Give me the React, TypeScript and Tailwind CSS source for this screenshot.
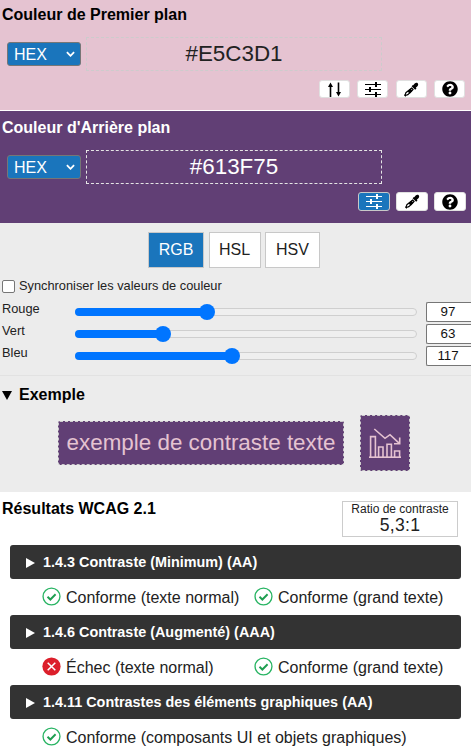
import React from 'react';
import { FaQuestionCircle } from 'react-icons/fa';

const Sliders = ({ active = false }: { active?: boolean }) => (
  <svg viewBox="0 0 16 15" className="w-[16px] h-[15px]" fill="none" stroke={active ? '#fff' : '#000'} strokeWidth="1">
    <path d="M0 2.5h16M0 7.5h16M0 12.5h16" />
    <path d="M11 0v5M5 5v5M11 10v5" strokeWidth="2" />
  </svg>
);

const Swap = () => (
  <svg viewBox="0 0 13 15" className="w-[13px] h-[15px]" fill="#000">
    <path d="M2.5 0.5l2.5 4.5H3.3v10H1.7V5H0z" />
    <path d="M10.5 14.5l2.5-4.5h-1.7V0.5H9.7V10H8z" />
  </svg>
);

const Dropper = () => (
  <svg viewBox="0 0 16 16" className="w-[15px] h-[15px]" fill="#000">
    <path d="M9.8 3.4l1.6-1.7c1-1 2.4-1.1 3.2-.3.8.8.7 2.2-.3 3.2l-1.7 1.6.7.7-1.4 1.4-3.8-3.8 1.4-1.4z" />
    <path d="M8.2 6.4l1.5 1.5-5.6 5.6-1.9.6-.7.7-.8-.8.7-.7.6-1.9 6.2-5z" fill="none" stroke="#000" strokeWidth="1.2" />
    <path d="M6.8 7l2.4 2.4-3 3-2.4-2.4z" />
  </svg>
);

const IconBtn = ({ children, active = false, wide = false }: { children: React.ReactNode; active?: boolean; wide?: boolean }) => (
  <button className={`${wide ? 'w-[32px] h-[19px]' : 'w-[31px] h-[18px]'} rounded-[3px] flex items-center justify-center border ${active ? 'bg-[#1a75bc] border-[#c8c8c8]' : 'bg-white border-[#e0e0e0]'}`}>
    {children}
  </button>
);

const HexSelect = () => (
  <div className="w-[74px] h-[24px] bg-[#1a75bc] border border-[#767676] rounded-[3px] flex items-center justify-between pl-[6px] pr-[5px] text-white text-[16px]">
    <span className="mt-px">HEX</span>
    <svg viewBox="0 0 10 6" className="w-[9px] h-[6px]" fill="none" stroke="#fff" strokeWidth="2"><path d="M1 1l4 4 4-4" /></svg>
  </div>
);

const Slider = ({ label, value, pct }: { label: string; value: number; pct: number }) => (
  <div className="h-[22px] flex items-center">
    <div className="w-[75px] text-[12.8px] text-[#222] -mt-[6px] pl-[2px]">{label}</div>
    <div className="relative w-[342px] h-[8px] rounded-full bg-[#efefef] border border-[#cfcfcf]">
      <div className="h-[8px] -mt-px -ml-px rounded-full bg-[#0075ff]" style={{ width: `${pct}px` }} />
      <div className="absolute top-[-5px] w-[16px] h-[16px] rounded-full bg-[#0075ff]" style={{ left: `${pct - 9}px` }} />
    </div>
    <div className="ml-[9px] w-[45px] h-[20px] bg-white border border-[#767676] rounded-l-[2px] border-r-0 flex items-center justify-center text-[13.33px] text-[#111] pr-[2px]">{value}</div>
  </div>
);

const CheckIcon = () => (
  <svg viewBox="0 0 20 20" className="w-[19px] h-[19px] shrink-0 mb-[2px]" fill="none">
    <circle cx="10" cy="10" r="8.9" stroke="#28b463" strokeWidth="1.4" />
    <path d="M5.8 10.3l3 2.9 5.5-5.6" stroke="#1e9e50" strokeWidth="2" />
  </svg>
);

const FailIcon = () => (
  <svg viewBox="0 0 20 20" className="w-[19px] h-[19px] shrink-0 mb-[2px]" fill="none">
    <circle cx="10" cy="10" r="9.6" fill="#dc1f2b" />
    <path d="M6 6l8 8M14 6l-8 8" stroke="#fff" strokeWidth="1.6" />
  </svg>
);

const Heading = ({ children }: { children: React.ReactNode }) => (
  <div className="mx-[10px] h-[34px] bg-[#333] rounded-[3px] flex items-center pl-[16px] pt-[2px] text-white font-bold text-[14.4px]">
    <svg viewBox="0 0 9 10" className="w-[9px] h-[10px] mr-[8px]" fill="#fff"><path d="M0 0l9 5-9 5z" /></svg>
    {children}
  </div>
);

const Result = ({ ok = true, children, w }: { ok?: boolean; children: React.ReactNode; w?: string }) => (
  <div className={`flex items-center gap-[5px] ${w ?? ''}`}>
    {ok ? <CheckIcon /> : <FailIcon />}
    <span className="mt-[2px]">{children}</span>
  </div>
);

export default function App() {
  return (
    <div className="w-[471px] h-[755px] overflow-hidden bg-white font-['Liberation_Sans',Arial,sans-serif] text-black">
      {/* premier plan */}
      <section className="h-[110px] bg-[#e5c3d1] pt-[6px] pl-[2px]">
        <h2 className="font-bold text-[16px] leading-[18px]">Couleur de Premier plan</h2>
        <div className="flex items-center mt-[13px] pl-[5px]">
          <HexSelect />
          <div className="ml-[5px] w-[296px] h-[34px] border border-dashed border-[#ccc] flex items-center justify-center text-[22.4px] text-[#222]">#E5C3D1</div>
        </div>
        <div className="flex justify-end gap-[7.5px] pr-[6px] mt-[9px]">
          <IconBtn><Swap /></IconBtn>
          <IconBtn><Sliders /></IconBtn>
          <IconBtn><Dropper /></IconBtn>
          <IconBtn><FaQuestionCircle className="text-[16px]" /></IconBtn>
        </div>
      </section>

      {/* arriere plan */}
      <section className="h-[112px] mt-px bg-[#613f75] pt-[8px] pl-[2px] text-white">
        <h2 className="font-bold text-[16px] leading-[18px]">Couleur d'Arrière plan</h2>
        <div className="flex items-center mt-[13px] pl-[5px]">
          <HexSelect />
          <div className="ml-[5px] w-[296px] h-[34px] border border-dashed border-[#e5e5e5] flex items-center justify-center text-[22.4px]">#613F75</div>
        </div>
        <div className="flex justify-end gap-[6px] pr-[5px] mt-[8px] text-black">
          <IconBtn active wide><Sliders active /></IconBtn>
          <IconBtn wide><Dropper /></IconBtn>
          <IconBtn wide><FaQuestionCircle className="text-[16px]" /></IconBtn>
        </div>
      </section>

      {/* reglages */}
      <section className="h-[269px] bg-[#ececec]">
        <div className="flex justify-center gap-[4.5px] pt-[9px] text-[16px] pr-[3px]">
          <div className="w-[56px] h-[36px] bg-[#1a75bc] border border-[#c8c8c8] text-white flex items-center justify-center">RGB</div>
          <div className="w-[52px] h-[36px] bg-white border border-[#c8c8c8] text-[#222] flex items-center justify-center">HSL</div>
          <div className="w-[55px] h-[36px] bg-white border border-[#c8c8c8] text-[#222] flex items-center justify-center">HSV</div>
        </div>
        <label className="flex items-center mt-[10px] pl-[2px] text-[12.8px] text-[#222] h-[16px]">
          <span className="w-[13px] h-[13px] rounded-[2px] bg-white border border-[#767676] mr-[4px]" />
          Synchroniser les valeurs de couleur
        </label>
        <div className="mt-[7px]">
          <Slider label="Rouge" value={97} pct={132} />
          <Slider label="Vert" value={63} pct={88} />
          <Slider label="Bleu" value={117} pct={157} />
        </div>
        <div className="mt-[8px] border-t border-[#e2e2e2] pt-[11px] pl-[2px] flex items-center font-bold text-[16px] h-[28px]">
          <svg viewBox="0 0 10 9" className="w-[10px] h-[9px] mr-[7px]" fill="#000"><path d="M0 0h10L5 9z" /></svg>
          Exemple
        </div>
        <div className="flex items-center justify-center gap-[16px] mt-[12px] pr-[3px]">
          <div className="w-[286px] h-[44px] bg-[#613f75] text-[#e5c3d1] border border-dashed border-[#ccc] rounded-[2px] flex items-center justify-center text-[22.4px]">
            exemple de contraste texte
          </div>
          <div className="w-[50px] h-[56px] bg-[#613f75] border border-dashed border-[#ccc] rounded-[2px] flex items-center justify-center">
            <svg viewBox="0 0 32 30" className="w-[32px] h-[30px]" fill="none" stroke="#e5c3d1" strokeWidth="1.6">
              <path d="M0 29.3h32" strokeWidth="1.8" />
              <path d="M1.6 29V8.6h4.8V29M9.6 29V19h4.4v10M18 29V16.3h4.4V29M25.6 29v-6h5v6" />
              <path d="M5.3 1l10.7 9.3 5-3.6 9.3 8.6" />
              <path d="M30.7 9.5v6.2H25" />
            </svg>
          </div>
        </div>
      </section>

      {/* resultats */}
      <section className="text-[16px] text-[#222]">
        <div className="h-[53px] flex justify-between pl-[2px] pr-[13px] pt-[9px]">
          <h2 className="font-bold text-[16px] leading-[14px] mt-px text-black">Résultats WCAG 2.1</h2>
          <div className="w-[116px] h-[36px] border border-[#ccc] flex flex-col items-center text-[#222]">
            <span className="text-[12px] leading-[13px] mt-[1px]">Ratio de contraste</span>
            <span className="text-[17.6px] leading-[19px] tracking-[0.3px]">5,3:1</span>
          </div>
        </div>
        <Heading>1.4.3 Contraste (Minimum) (AA)</Heading>
        <div className="h-[36px] flex items-center pl-[42px]">
          <Result w="w-[212px]">Conforme (texte normal)</Result>
          <Result>Conforme (grand texte)</Result>
        </div>
        <Heading>1.4.6 Contraste (Augmenté) (AAA)</Heading>
        <div className="h-[36px] flex items-center pl-[42px]">
          <Result ok={false} w="w-[212px]">Échec (texte normal)</Result>
          <Result>Conforme (grand texte)</Result>
        </div>
        <Heading>1.4.11 Contrastes des éléments graphiques (AA)</Heading>
        <div className="h-[36px] flex items-center pl-[42px]">
          <Result>Conforme (composants UI et objets graphiques)</Result>
        </div>
      </section>
    </div>
  );
}
